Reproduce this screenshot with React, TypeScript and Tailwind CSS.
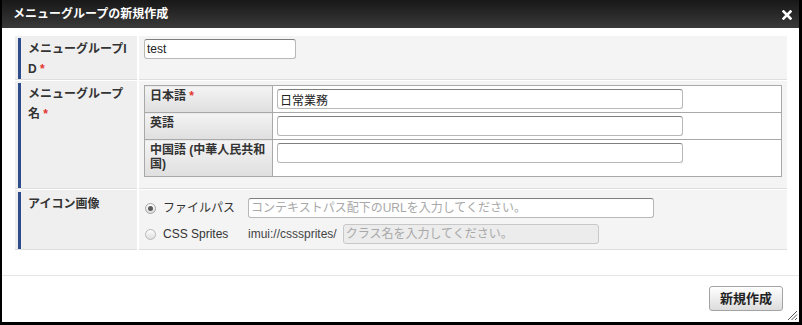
import React from 'react'

const font = "font-['Liberation_Sans','Noto_Sans_CJK_JP',sans-serif]"

function Req() {
  return (
    <>
      {' '}
      <span className="text-[#e3342f] font-bold">*</span>
    </>
  )
}

function RowLabel({ children }: { children: React.ReactNode }) {
  return (
    <div className="bg-[#efefef] border-b border-[#dedede] pl-[3px] pt-[2px]">
      <div className="h-full border-l-[3px] border-[#2f4d8c] pl-[7px] pr-[5px] pt-[1px] text-[12px] leading-[20px] font-bold text-[#333] break-all">
        {children}
      </div>
    </div>
  )
}

function TextInput({
  value,
  placeholder,
  width,
  disabled,
}: {
  value?: string
  placeholder?: string
  width: string
  disabled?: boolean
}) {
  return (
    <input
      type="text"
      readOnly
      defaultValue={value}
      placeholder={placeholder}
      disabled={disabled}
      className={`block ${width} h-[20px] rounded-[3px] border px-[2px] text-[12px] text-[#222] outline-none placeholder:text-[#a8a8a8] ${
        disabled
          ? 'bg-[#ececec] border-[#c8c8c8]'
          : 'bg-white border-[#b8b8b8] border-t-[#7f7f7f]'
      } ${font}`}
    />
  )
}

function Radio({ checked }: { checked?: boolean }) {
  return (
    <span
      className={`flex h-[11px] w-[11px] items-center justify-center rounded-full border bg-gradient-to-b from-[#fdfdfd] to-[#dedede] ${
        checked ? 'border-[#a5a5a5]' : 'border-[#b8b8b8]'
      }`}
    >
      {checked && <span className="h-[5px] w-[5px] rounded-full bg-[#5a5a5a]" />}
    </span>
  )
}

export default function App() {
  const langs = [
    { label: <>日本語<Req /></>, value: '日常業務' },
    { label: '英語', value: '' },
    { label: '中国語 (中華人民共和国)', value: '' },
  ]

  return (
    <div className={`w-[802px] h-[325px] bg-black pl-[2px] pr-[3px] pb-[3px] ${font}`}>
      <div className="relative flex h-full flex-col bg-white">
        {/* Title bar */}
        <div className="flex h-[28px] shrink-0 items-center justify-between bg-gradient-to-b from-[#181818] to-[#3a3a3a] pl-[11px] pr-[7px]">
          <span className="text-[12px] font-bold text-white">メニューグループの新規作成</span>
          <svg width="10" height="10" viewBox="0 0 10 10" className="mt-[1px]">
            <path d="M1.5 1.5l7 7M8.5 1.5l-7 7" stroke="white" strokeWidth="2.6" strokeLinecap="square" />
          </svg>
        </div>

        {/* Form */}
        <div className="pl-[13px] pr-[12px] pt-[8px] pb-[25px]">
          <div className="grid grid-cols-[122px_1fr] gap-x-[2px] gap-y-[1px]">
            <RowLabel>
              メニューグループID<Req />
            </RowLabel>
            <div className="bg-[#f4f4f4] border-b border-[#dedede] pl-[5px] pt-[3px]">
              <TextInput value="test" width="w-[152px]" />
            </div>

            <RowLabel>
              メニューグループ名<Req />
            </RowLabel>
            <div className="bg-[#f4f4f4] border-b border-[#dedede] px-[5px] pt-[4px] pb-[11px]">
              <table className="w-full border-collapse border border-[#a9a9a9]">
                <tbody>
                  {langs.map((l, i) => (
                    <tr key={i} className="border-b border-[#a9a9a9] last:border-b-0">
                      <th className="w-[128px] border-r border-[#a9a9a9] bg-gradient-to-b from-[#f4f4f4] to-[#dfdfdf] px-[5px] pt-[3px] pb-[5px] text-left align-top text-[12px] leading-[14px] font-bold text-[#333]">
                        {l.label}
                      </th>
                      <td className="bg-white pl-[4px] py-[3px] align-top">
                        <TextInput value={l.value} width="w-[406px]" />
                      </td>
                    </tr>
                  ))}
                </tbody>
              </table>
            </div>

            <RowLabel>
              <div className="pt-[1px]">アイコン画像</div>
            </RowLabel>
            <div className="flex flex-col gap-[6px] bg-[#f4f4f4] border-b border-[#dedede] pl-[6px] pt-[8px] pb-[5px] text-[12px] text-[#333]">
              <div className="flex h-[20px] items-center">
                <div className="flex w-[103px] items-center gap-[7px]">
                  <Radio checked />
                  <span>ファイルパス</span>
                </div>
                <TextInput placeholder="コンテキストパス配下のURLを入力してください。" width="w-[406px]" />
              </div>
              <div className="flex h-[20px] items-center">
                <div className="flex w-[103px] items-center gap-[7px]">
                  <Radio />
                  <span>CSS Sprites</span>
                </div>
                <span className="mr-[6px] text-[#444]">imui://csssprites/</span>
                <TextInput placeholder="クラス名を入力してください。" width="w-[256px]" disabled />
              </div>
            </div>
          </div>
        </div>

        {/* Footer */}
        <div className="flex flex-1 justify-end border-t border-[#e6e6e6] pt-[10px] pr-[16px]">
          <button
            type="button"
            className="h-[25px] w-[74px] rounded-[3px] border border-[#a3a3a3] bg-gradient-to-b from-[#ffffff] to-[#dcdcdc] text-[13px] font-bold text-[#222]"
          >
            新規作成
          </button>
        </div>

        {/* Resize grip */}
        <svg width="11" height="11" viewBox="0 0 11 11" className="absolute bottom-[1px] right-[1px]">
          <path d="M10 1L1 10M10 4.5L4.5 10M10 8L8 10" stroke="#555" strokeWidth="1" />
        </svg>
      </div>
    </div>
  )
}
